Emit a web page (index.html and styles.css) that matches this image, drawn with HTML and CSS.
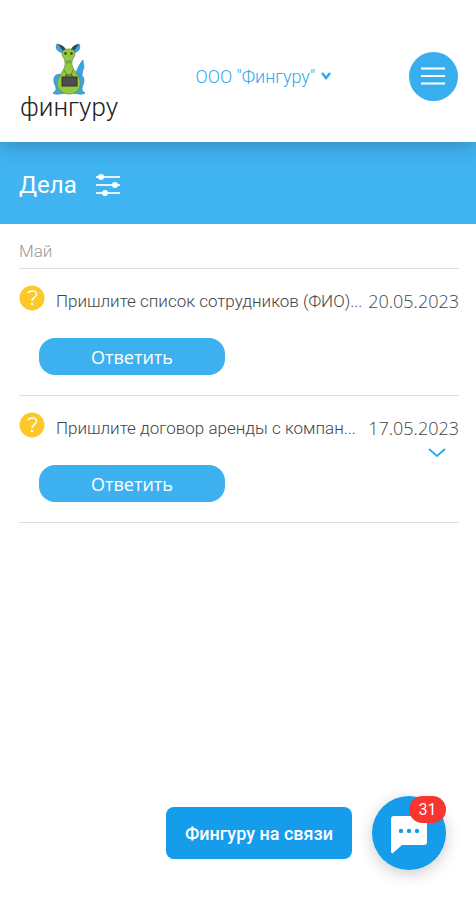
FILE: index.html
```html
<!DOCTYPE html>
<html lang="ru">
<head>
  <meta charset="utf-8">
  <meta name="viewport" content="width=device-width, initial-scale=1">
  <title>Дела</title>
  <link rel="stylesheet" href="styles.css">
</head>
<body>

<header class="header">
  <a class="logo" href="#">
    <svg class="logo-pic" viewBox="0 0 36 52" width="36" height="52" aria-hidden="true">
      <path d="M23 34 C26 29 26 24 32 17 C32 21 34 23 32 27 C31 31 31 34 27 38 Z" fill="#35a8e8" stroke="#3d7fa5" stroke-width=".7"/>
      <path d="M12 32 C4 29 1 35 4 42 C6 46 5 48 2 50 C4 52 9 51 14 50 Z M24 32 C31 29 35 35 32 42 C30 46 31 48 34 50 C31 52 27 51 22 50 Z" fill="#35a8e8" stroke="#3d7fa5" stroke-width=".7"/>
      <path d="M13 10 C6 9 4 5 6 1 C10 2 13 4 15 7 Z" fill="#35a8e8" stroke="#3d6f8a" stroke-width=".7"/>
      <path d="M22 10 C28 9 30 5 28 1 C24 2 21 4 20 7 Z" fill="#35a8e8" stroke="#3d6f8a" stroke-width=".7"/>
      <path d="M7 1 C11 2 14 4 15 7 L12 8 Z M28 1 C23 2 21 4 20 7 L23 8 Z" fill="#444"/>
      <path d="M14 18 C15 25 11 28 9 33 C3 40 7 51 18 51 C29 51 32 40 27 33 C25 28 20 25 21 18 Z" fill="#93c83f" stroke="#5f8740" stroke-width=".7"/>
      <path d="M17.5 6 C11 6 10 10 12 14 C14 16 13 20 17.500 20 C22 20 21 16 23 14 C25 10 24 6 17.500 6 Z" fill="#93c83f" stroke="#5f8740" stroke-width=".7"/>
      <circle cx="14.5" cy="10.5" r="1.200" fill="#333"/>
      <circle cx="20.5" cy="10.5" r="1.200" fill="#333"/>
      <path d="M15.500 18 H19.500 M13 27 L16 32 M22 27 L20 32" fill="none" stroke="#5f8740"/>
      <path d="M15 34 V32 H21 V34" fill="none" stroke="#444"/>
      <rect x="11" y="34" width="15" height="9" fill="#4a4c50" stroke="#333"/>
    </svg>
    <span class="logo-text">фингуру</span>
  </a>
  <div class="company">
    <select class="company-select" aria-label="Компания">
      <option>ООО "Фингуру"</option>
    </select>
    <svg class="company-arrow" viewBox="0 0 12 10" width="12" height="10" aria-hidden="true">
      <path d="M2 2 L6 7 L10 2"/>
    </svg>
  </div>
  <button class="menu" type="button" aria-label="Меню">
    <svg viewBox="0 0 26 20" width="26" height="20" aria-hidden="true">
      <path d="M1 2.500 H25 M1 10 H25 M1 17.500 H25"/>
    </svg>
  </button>
</header>

<div class="title-bar">
  <h1 class="title">Дела</h1>
  <button class="filter" type="button" aria-label="Фильтр">
    <svg viewBox="0 0 26 22" width="26" height="22" aria-hidden="true">
      <path d="M1 3 H25 M1 11 H25 M1 19 H25" fill="none" stroke="#e3f3fd" stroke-width="2"/>
      <g fill="#fff">
        <circle cx="6" cy="3" r="3"/>
        <circle cx="20" cy="11" r="3"/>
        <circle cx="10" cy="19" r="3"/>
      </g>
    </svg>
  </button>
</div>

<main class="content">
  <h2 class="month">Май</h2>
  <ul class="tasks">
    <li class="task">
      <div class="task-head">
        <svg class="task-icon" viewBox="0 0 26 26" width="26" height="26" aria-hidden="true">
          <circle cx="13" cy="13" r="12.5" fill="#fdc928"/>
          <path d="M8.500 8 C11 5 18 5 17.500 9.500 C17 12.500 13 13 13 16" fill="none" stroke="#fff" stroke-width="1.500"/>
          <circle cx="13" cy="19" r="1.200" fill="#fff"/>
        </svg>
        <span class="task-name">Пришлите список сотрудников (ФИО)...</span>
        <time class="task-date" datetime="2023-05-20">20.05.2023</time>
      </div>
      <button class="answer" type="button">Ответить</button>
    </li>
    <li class="task">
      <div class="task-head">
        <svg class="task-icon" viewBox="0 0 26 26" width="26" height="26" aria-hidden="true">
          <circle cx="13" cy="13" r="12.5" fill="#fdc928"/>
          <path d="M8.500 8 C11 5 18 5 17.500 9.500 C17 12.500 13 13 13 16" fill="none" stroke="#fff" stroke-width="1.500"/>
          <circle cx="13" cy="19" r="1.200" fill="#fff"/>
        </svg>
        <span class="task-name">Пришлите договор аренды с компан...</span>
        <time class="task-date" datetime="2023-05-17">17.05.2023</time>
      </div>
      <button class="answer" type="button">Ответить</button>
      <button class="expand" type="button" aria-label="Развернуть">
        <svg viewBox="0 0 18 10" width="18" height="10" aria-hidden="true">
          <path d="M1 1 L9 8 L17 1"/>
        </svg>
      </button>
    </li>
  </ul>
</main>

<div class="chat">
  <button class="chat-label" type="button">Фингуру на связи</button>
  <button class="chat-button" type="button" aria-label="Открыть чат">
    <svg viewBox="0 0 38 40" width="38" height="40" aria-hidden="true">
      <path d="M4 1 H34 Q37 1 37 4 V27 Q37 30 34 30 H12 L3 38 Q1 39 1 36 V4 Q1 1 4 1 Z" fill="#fff"/>
      <g fill="#159ceb">
        <circle cx="11" cy="16" r="2.200"/>
        <circle cx="19" cy="16" r="2.200"/>
        <circle cx="27" cy="16" r="2.200"/>
      </g>
    </svg>
    <span class="badge">31</span>
  </button>
</div>

</body>
</html>
```

FILE: styles.css
```css
* {
  box-sizing: border-box;
}
body {
  margin: 0;
  background-color: #fff;
  color: #444;
  font-family: Roboto, "Open Sans", sans-serif;
  font-size: 18px;
  font-weight: 300;
}
button {
  margin: 0;
  padding: 0;
  border: none;
  background: none;
  font-family: inherit;
  cursor: pointer;
}
svg {
  display: block;
}

/* header */
.header {
  position: relative;
  z-index: 1;
  display: flex;
  align-items: center;
  justify-content: space-between;
  height: 142px;
  padding: 10px 18px 0 20px;
  background-color: #fff;
  box-shadow: 0 2px 20px rgba(0, 0, 0, 0.25);
}
.logo {
  display: flex;
  flex-direction: column;
  align-items: center;
  padding-top: 10px;
  color: #222;
  text-decoration: none;
}
.logo-text {
  font-size: 26px;
  line-height: 24px;
}
.company {
  display: flex;
  align-items: center;
  gap: 4px;
}
.company-select {
  appearance: none;
  padding: 0;
  border: none;
  background: none;
  color: #2fa8ee;
  font-family: inherit;
  font-size: 18px;
  font-weight: 300;
}
.company-arrow {
  fill: none;
  stroke: #2fa8ee;
  stroke-width: 2.5;
}
.menu {
  display: flex;
  align-items: center;
  justify-content: center;
  width: 49px;
  height: 49px;
  border-radius: 50%;
  background-color: #38aeee;
}
.menu svg {
  stroke: #fff;
  stroke-width: 2;
}

/* blue bar */
.title-bar {
  display: flex;
  align-items: center;
  gap: 18px;
  height: 82px;
  padding: 4px 19px 0;
  background-color: #40b3f1;
}
.title {
  margin: 0;
  color: #fff;
  font-size: 24px;
  font-weight: 400;
}

/* tasks */
.content {
  padding: 0 17px 0 19px;
}
.month {
  margin: 0;
  padding-top: 15px;
  height: 45px;
  border-bottom: 1px solid #ddd;
  color: #999;
  font-size: 17px;
  font-weight: 300;
  line-height: 24px;
}
.tasks {
  margin: 0;
  padding: 0;
  list-style: none;
}
.task {
  position: relative;
  padding: 16px 0 20px;
  border-bottom: 1px solid #ddd;
}
.task-head {
  display: flex;
  align-items: flex-start;
  height: 53px;
}
.task-icon {
  flex: none;
  margin-right: 11px;
}
.task-name {
  flex: 1;
  min-width: 0;
  overflow: hidden;
  padding-top: 4px;
  font-size: 17px;
  line-height: 24px;
  white-space: nowrap;
  text-overflow: clip;
}
.task-date {
  padding-top: 4px;
  font-family: "Open Sans", "Noto Sans", sans-serif;
  line-height: 24px;
}
.answer {
  display: block;
  width: 186px;
  height: 37px;
  margin-left: 20px;
  border-radius: 16px;
  background-color: #3db1f0;
  color: #fff;
  font-family: "Open Sans", "Noto Sans", sans-serif;
  font-size: 18px;
}
.expand {
  position: absolute;
  top: 52px;
  right: 13px;
}
.expand svg {
  fill: none;
  stroke: #2fa8ee;
  stroke-width: 2;
}

/* chat */
.chat {
  position: fixed;
  right: 30px;
  bottom: 30px;
  display: flex;
  align-items: center;
  gap: 20px;
}
.chat-label {
  height: 52px;
  padding: 0 19px;
  border-radius: 8px;
  background-color: #159ceb;
  color: #fff;
  font-size: 18px;
  font-weight: 500;
}
.chat-button {
  position: relative;
  display: flex;
  align-items: center;
  justify-content: center;
  width: 74px;
  height: 74px;
  padding-top: 4px;
  border-radius: 50%;
  background-color: #159ceb;
  box-shadow: 0 4px 16px rgba(0, 0, 0, 0.2);
}
.badge {
  position: absolute;
  top: 0;
  right: 0;
  width: 37px;
  border-radius: 14px;
  background-color: #f9352f;
  color: #fff;
  font-size: 16px;
  line-height: 27px;
  text-align: center;
}
```
